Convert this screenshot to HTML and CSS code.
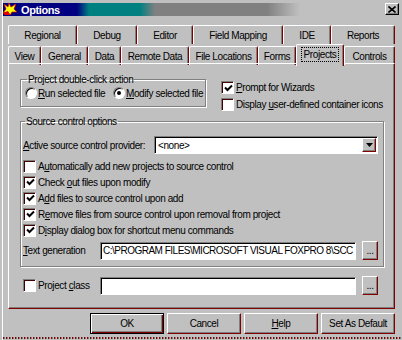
FILE: index.html
```html
<!DOCTYPE html>
<html lang="en">
<head>
<meta charset="utf-8">
<title>Options</title>
<link rel="stylesheet" href="styles.css">
</head>
<body>
<div class="win">
  <div class="titlebar">
    <div class="caption">
      <svg class="appicon" width="15" height="13" viewBox="0 0 15 13">
        <polygon points="1,1 5,4 6,0 8,4 13,1 11,6 14,9 9,9 7,12 5,9 0,10 3,6" fill="#ffff00" stroke="#d00000" stroke-width="0.7"/>
        <polygon points="0,10 5,8 7,12 2,12" fill="#e00000"/>
      </svg>
      <span class="title">Options</span>
    </div>
    <div class="closebtn"><svg width="8" height="7" viewBox="0 0 8 7"><path d="M0.5 0.5L7.5 6.5M7.5 0.5L0.5 6.5" stroke="#000" stroke-width="1.6"/></svg></div>
  </div>

  <div class="tabs">
    <div class="tabrow row1">
      <div class="tab">Regional</div>
      <div class="tab">Debug</div>
      <div class="tab">Editor</div>
      <div class="tab">Field Mapping</div>
      <div class="tab">IDE</div>
      <div class="tab">Reports</div>
    </div>
    <div class="tabrow row2">
      <div class="tab">View</div>
      <div class="tab">General</div>
      <div class="tab">Data</div>
      <div class="tab">Remote Data</div>
      <div class="tab">File Locations</div>
      <div class="tab">Forms</div>
      <div class="tab active"><span class="focus">Projects</span></div>
      <div class="tab">Controls</div>
    </div>
  </div>

  <div class="panel">
    <div class="top">
      <fieldset class="group dblclick">
        <legend>Project double-click action</legend>
        <div class="radios">
          <div class="opt first"><span class="radio"></span><span><u>R</u>un selected file</span></div>
          <div class="opt"><span class="radio on"></span><span><u>M</u>odify selected file</span></div>
        </div>
      </fieldset>
      <div class="rightcol">
        <div class="opt"><span class="cb"><svg width="9" height="9" viewBox="0 0 9 9"><path d="M1 3.5L3.5 6L8 1.5" fill="none" stroke="#000" stroke-width="2"/></svg></span><span><u>P</u>rompt for Wizards</span></div>
        <div class="opt"><span class="cb"></span><span>Display <u>u</u>ser-defined container icons</span></div>
      </div>
    </div>

    <fieldset class="group source">
      <legend>Source control options</legend>
      <div class="provider">
        <span class="lbl"><u>A</u>ctive source control provider:</span>
        <div class="combo">
          <span class="val">&lt;none&gt;</span>
          <span class="ddbtn"><svg width="7" height="4" viewBox="0 0 7 4"><path d="M0 0H7L3.5 4Z" fill="#000"/></svg></span>
        </div>
      </div>
      <div class="opt srcopt first"><span class="cb"></span><span>A<u>u</u>tomatically add new projects to source control</span></div>
      <div class="opt srcopt"><span class="cb"><svg width="9" height="9" viewBox="0 0 9 9"><path d="M1 3.5L3.5 6L8 1.5" fill="none" stroke="#000" stroke-width="2"/></svg></span><span>Check <u>o</u>ut files upon modify</span></div>
      <div class="opt srcopt"><span class="cb"><svg width="9" height="9" viewBox="0 0 9 9"><path d="M1 3.5L3.5 6L8 1.5" fill="none" stroke="#000" stroke-width="2"/></svg></span><span>A<u>d</u>d files to source control upon add</span></div>
      <div class="opt srcopt"><span class="cb"><svg width="9" height="9" viewBox="0 0 9 9"><path d="M1 3.5L3.5 6L8 1.5" fill="none" stroke="#000" stroke-width="2"/></svg></span><span>R<u>e</u>move files from source control upon removal from project</span></div>
      <div class="opt srcopt"><span class="cb"><svg width="9" height="9" viewBox="0 0 9 9"><path d="M1 3.5L3.5 6L8 1.5" fill="none" stroke="#000" stroke-width="2"/></svg></span><span>D<u>i</u>splay dialog box for shortcut menu commands</span></div>
      <div class="fieldrow textgen">
        <span class="lbl"><u>T</u>ext generation</span>
        <div class="field path">C:\PROGRAM FILES\MICROSOFT VISUAL FOXPRO 8\SCC</div>
        <div class="btn dots">...</div>
      </div>
    </fieldset>

    <div class="fieldrow classrow">
      <div class="opt lbl"><span class="cb"></span><span>Project <u>c</u>lass</span></div>
      <div class="field"></div>
      <div class="btn dots">...</div>
    </div>
  </div>

  <div class="buttons">
    <div class="btn default">OK</div>
    <div class="btn">Cancel</div>
    <div class="btn"><span><u>H</u>elp</span></div>
    <div class="btn">Set As Default</div>
  </div>

  <div class="frame-bottom"></div>
</div>
</body>
</html>
```

FILE: styles.css
```css
* { box-sizing: border-box; }
html, body { margin: 0; padding: 0; }
body {
  width: 402px;
  height: 340px;
  overflow: hidden;
  background: #c0c0c0;
  font-family: "Liberation Sans", Arial, sans-serif;
  font-size: 10px;
  letter-spacing: -0.4px;
  color: #000;
}
u { text-decoration: underline; text-underline-offset: 1px; }

.win {
  height: 340px;
  margin-left: 2px;
  border-left: 1px solid #fff;
  display: flex;
  flex-direction: column;
}

/* title bar */
.titlebar { display: flex; margin-top: 3px; height: 13px; }
.caption {
  width: 297px;
  height: 13px;
  display: flex;
  align-items: center;
  background: linear-gradient(90deg, #000080 0 74px, #008080 86px 137px, #808080 152px 264px, #c0c0c0 297px);
}
.appicon { flex: none; }
.title {
  color: #fff;
  font-weight: bold;
  font-size: 11px;
  letter-spacing: -0.4px;
  margin-left: 3px;
}
.closebtn {
  margin-left: auto;
  margin-right: 3px;
  width: 14px;
  height: 12px;
  border: 1px solid;
  border-color: #fff #000 #000 #fff;
  box-shadow: inset -1px -1px #808080;
  display: flex;
  align-items: center;
  justify-content: center;
}

/* tabs */
.tabs { margin: 9px 0 0 5px; width: 387px; }
.tabrow { display: grid; height: 19px; }
.row1 { grid-template-columns: 69px 60px 56px 90px 48px 64px; }
.row2 { grid-template-columns: 33px 47px 33px 68px 69px 38px 48px 51px; align-items: end; }
.tab {
  height: 19px;
  border-top: 1px solid #fff;
  border-left: 1px solid #fff;
  border-right: 1px solid #800000;
  border-radius: 2px 2px 0 0;
  box-shadow: inset -1px 0 #808080;
  background: #c0c0c0;
  display: flex;
  align-items: center;
  justify-content: center;
  white-space: nowrap;
}
.tab.active {
  height: 22px;
  margin-bottom: -1px;
  position: relative;
  z-index: 1;
  padding-bottom: 2px;
}
.focus { outline: 1px dotted #000; outline-offset: 1px; padding: 0 1px; }

/* panel */
.panel {
  margin-left: 5px;
  width: 387px;
  height: 246px;
  border: 1px solid;
  border-color: #fff #800000 #800000 #fff;
  box-shadow: inset -1px -1px #808080;
  padding: 9px 0 0 11px;
}
.top { display: flex; align-items: flex-start; }

.group {
  margin: 0;
  padding: 0;
  min-width: 0;
  border: 1px solid #808080;
  box-shadow: inset 1px 1px #fff, 1px 1px #fff;
}
legend {
  padding: 0 1px;
  margin-left: 2px;
  height: 13px;
  line-height: 13px;
}

.dblclick { width: 186px; padding: 0 0 6px 4px; }
.radios { display: flex; height: 14px; align-items: center; }
.opt { display: flex; align-items: center; white-space: nowrap; }
.radios .first { width: 88px; }
.radio {
  position: relative;
  flex: none;
  width: 12px;
  height: 12px;
  border-radius: 50%;
  background: #fff;
  border: 1px solid;
  border-color: #808080 #fff #fff #808080;
  box-shadow: inset 1px 1px #000;
  margin-right: 1px;
}
.radio.on::after {
  content: "";
  position: absolute;
  left: 3px;
  top: 3px;
  width: 4px;
  height: 4px;
  border-radius: 50%;
  background: #000;
}

.cb {
  flex: none;
  width: 13px;
  height: 13px;
  background: #fff;
  border: 1px solid;
  border-color: #808080 #fff #fff #808080;
  box-shadow: inset 1px 1px #400000;
  margin-right: 2px;
  display: flex;
  align-items: center;
  justify-content: center;
}
.cb svg { margin: 1px 0 0 1px; }

.rightcol { margin: 8px 0 0 15px; display: flex; flex-direction: column; gap: 4px; }
.rightcol .opt { height: 13px; }

/* source control group */
.source { width: 364px; margin-top: 4px; padding: 0 0 6px 2px; }
.provider { display: flex; align-items: center; height: 18px; margin-top: 8px; }
.provider .lbl { width: 131px; }
.combo {
  width: 224px;
  height: 18px;
  background: #fff;
  border: 1px solid;
  border-color: #808080 #fff #fff #808080;
  box-shadow: inset 1px 1px #000;
  display: flex;
  align-items: center;
  padding-left: 3px;
}
.ddbtn {
  margin-left: auto;
  margin-right: 1px;
  width: 14px;
  height: 14px;
  background: #c0c0c0;
  border: 1px solid;
  border-color: #fff #800000 #800000 #fff;
  box-shadow: inset -1px -1px #808080;
  display: flex;
  align-items: center;
  justify-content: center;
}
.srcopt { height: 16px; }
.srcopt.first { margin-top: 4px; }

.fieldrow { display: flex; align-items: center; height: 19px; }
.fieldrow .lbl { width: 77px; }
.textgen { margin-top: 3px; }
.field {
  width: 256px;
  height: 18px;
  background: #fff;
  border: 1px solid;
  border-color: #808080 #fff #fff #808080;
  box-shadow: inset 1px 1px #000;
  padding: 0 0 0 2px;
  line-height: 16px;
  white-space: nowrap;
  overflow: hidden;
}
.field.path { letter-spacing: -0.5px; }
.btn {
  width: 74px;
  height: 21px;
  background: #c0c0c0;
  border: 1px solid;
  border-color: #fff #800000 #800000 #fff;
  box-shadow: inset -1px -1px #808080;
  display: flex;
  align-items: center;
  justify-content: center;
  white-space: nowrap;
}
.btn.dots { width: 16px; height: 19px; margin-left: 6px; line-height: 1; }
.classrow { margin-top: 9px; padding-left: 3px; }

/* dialog buttons */
.buttons {
  width: 392px;
  display: flex;
  justify-content: flex-end;
  gap: 3px;
  margin-top: 4px;
}
.btn.default {
  border-color: #000;
  box-shadow: inset 1px 1px #fff, inset -1px -1px #800000, inset -2px -2px #808080;
}

.frame-bottom {
  margin-top: auto;
  margin-bottom: 1px;
  height: 2px;
  background: repeating-linear-gradient(90deg, #800000 0 1px, #808080 1px 2px, #c0c0c0 2px 3px);
}
```
